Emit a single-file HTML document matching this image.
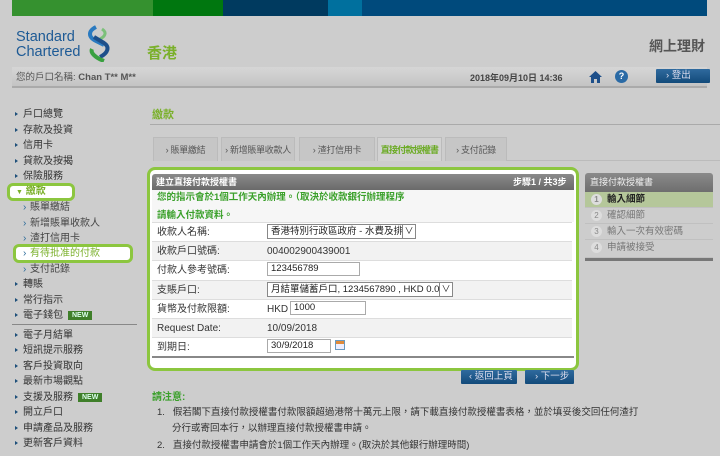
<!DOCTYPE html>
<html><head><meta charset="utf-8">
<style>
*{margin:0;padding:0;box-sizing:border-box}
body{width:720px;height:456px;overflow:hidden;background:#cdcdcd;font-family:"Liberation Sans","Noto Sans CJK TC",sans-serif;font-size:10px;line-height:12px;color:#3a3a3a;position:relative}
.a{position:absolute;white-space:nowrap}
.nav{position:absolute;left:23px;font-size:10px;color:#333;white-space:nowrap}
.nav:before{content:"";position:absolute;left:-8px;top:3px;border-left:3px solid #1d4f7a;border-top:2.5px solid transparent;border-bottom:2.5px solid transparent}
.sub{position:absolute;left:30px;font-size:10px;color:#444;white-space:nowrap}
.sub:before{content:"›";position:absolute;left:-7px;top:0;color:#2a6a9a}
.new{display:inline-block;background:#3f7f2a;color:#dfe;font-size:7px;line-height:9px;font-weight:bold;padding:0 4px;margin-left:5px;vertical-align:1px}
.tab{position:absolute;top:137px;height:24px;border:1px solid #bbb;border-bottom:none;background:#c6c6c6;color:#555;font-size:9px;text-align:center;line-height:24px;white-space:nowrap;overflow:hidden;letter-spacing:-0.3px}
.row{position:absolute;left:152px;width:420px;border-top:1px solid #ddd;background:#fff}
.row.g{background:#f2f2f2}
.row span{position:absolute;left:5px;top:4px;font-size:10px;color:#333;white-space:nowrap}
.row b{position:absolute;left:115px;top:4px;font-weight:normal;font-size:10px;color:#333;white-space:nowrap}
.inp{position:absolute;border:1px solid #aaa;background:#fff;height:14px;font-size:9.5px;line-height:12px;padding:0 3px;color:#222;white-space:nowrap}
.sel{position:absolute;border:1px solid #888;background:#fff;height:15px;font-size:9.5px;line-height:13px;padding:0 16px 0 3px;color:#222;white-space:nowrap;overflow:hidden}
.sel i{position:absolute;right:0;top:0;width:13px;height:13px;border-left:1px solid #888;background:#fff;font-style:normal;text-align:center;line-height:12px;font-size:9px}
.step{position:absolute;left:585px;width:128px;height:16px;font-size:9.5px;color:#777;border-bottom:1px solid #c0c0c0;white-space:nowrap}
.step em{position:absolute;left:6px;top:2px;width:11px;height:11px;border-radius:50%;background:#ddd;color:#888;font-style:normal;font-size:8px;text-align:center;line-height:11px}
.step span{position:absolute;left:22px;top:2px}
.btn{position:absolute;height:14px;background:linear-gradient(#2f6a9e,#124a7a);color:#dde;font-size:9.5px;line-height:14px;border-radius:1px;white-space:nowrap}
</style></head><body>
<div class="a" style="left:12px;top:0;width:141px;height:16px;background:#35912f"></div>
<div class="a" style="left:153px;top:0;width:70px;height:16px;background:#00770f"></div>
<div class="a" style="left:223px;top:0;width:105px;height:16px;background:#003a5f"></div>
<div class="a" style="left:328px;top:0;width:34px;height:16px;background:#00709e"></div>
<div class="a" style="left:362px;top:0;width:345px;height:16px;background:#004a7c"></div>
<div class="a" style="left:16px;top:30px;font-size:14.5px;line-height:15px;color:#1d5a95">Standard<br>Chartered</div>
<svg class="a" style="left:86px;top:25px" width="26" height="37" viewBox="0 0 26 37">
<path d="M10 2 C2 6 2 12 10 16 L18 20" stroke="#2a7ac0" stroke-width="4" fill="none"/>
<path d="M16 4 C22 8 18 12 14 14" stroke="#7cc07a" stroke-width="3" fill="none"/>
<path d="M8 12 L18 18 C24 22 22 28 14 32" stroke="#1d4f8a" stroke-width="4" fill="none"/>
<path d="M6 24 C4 28 10 33 18 36" stroke="#3aa040" stroke-width="4" fill="none"/>
</svg>
<div class="a" style="left:147px;top:45px;font-size:15px;line-height:17px;color:#7ab02a;font-weight:bold">香港</div>
<div class="a" style="left:649px;top:38px;font-size:14px;line-height:16px;color:#555;font-weight:bold">網上理財</div>
<div class="a" style="left:12px;top:67px;width:695px;height:21px;background:linear-gradient(#d6d6d6,#c4c4c4);border-bottom:2px solid #aaa"></div>
<div class="a" style="left:16px;top:72px;font-size:9.5px;color:#555">您的戶口名稱: <b>Chan T** M**</b></div>
<div class="a" style="left:470px;top:72px;font-size:9px;color:#444;font-weight:bold">2018年09月10日 14:36</div>
<svg class="a" style="left:589px;top:71px" width="13" height="12" viewBox="0 0 13 12"><path d="M6.5 0 L13 6 L11 6 L11 12 L8 12 L8 8 L5 8 L5 12 L2 12 L2 6 L0 6 Z" fill="#1d4f8a"/></svg>
<div class="a" style="left:615px;top:70px;width:13px;height:13px;border-radius:50%;background:#2a6aa5;color:#fff;font-size:9px;font-weight:bold;text-align:center;line-height:13px">?</div>
<div class="btn" style="left:656px;top:69px;width:54px;padding-left:10px">› 登出</div>
<!-- sidebar -->
<div class="nav" style="top:109px">戶口總覽</div>
<div class="nav" style="top:125px">存款及投資</div>
<div class="nav" style="top:140px">信用卡</div>
<div class="nav" style="top:156px">貸款及按揭</div>
<div class="nav" style="top:171px">保險服務</div>
<div class="a" style="left:7px;top:183px;width:68px;height:18px;background:#fff;border:3px solid #8cc63f;border-radius:6px"></div>
<div class="a" style="left:16px;top:186px;font-size:10px;color:#7ab02a;font-weight:bold"><span style="font-size:7px">▼</span> 繳款</div>
<div class="sub" style="top:202px">賬單繳結</div>
<div class="sub" style="top:218px">新增賬單收款人</div>
<div class="sub" style="top:233px">渣打信用卡</div>
<div class="a" style="left:13px;top:244px;width:120px;height:19px;background:#fff;border:3px solid #8cc63f;border-radius:6px"></div>
<div class="sub" style="top:248px;color:#7ab02a">有待批准的付款</div>
<div class="sub" style="top:264px">支付記錄</div>
<div class="nav" style="top:279px">轉賬</div>
<div class="nav" style="top:295px">常行指示</div>
<div class="nav" style="top:310px">電子錢包<span class="new">NEW</span></div>
<div class="a" style="left:12px;top:324px;width:125px;height:1px;background:#888"></div>
<div class="nav" style="top:330px">電子月結單</div>
<div class="nav" style="top:345px">短訊提示服務</div>
<div class="nav" style="top:361px">客戶投資取向</div>
<div class="nav" style="top:376px">最新市場觀點</div>
<div class="nav" style="top:392px">支援及服務<span class="new">NEW</span></div>
<div class="nav" style="top:407px">開立戶口</div>
<div class="nav" style="top:423px">申請產品及服務</div>
<div class="nav" style="top:438px">更新客戶資料</div>
<!-- content -->
<div class="a" style="left:152px;top:109px;font-size:11px;line-height:13px;color:#7ab02a;font-weight:bold">繳款</div>
<div class="a" style="left:150px;top:124px;width:570px;height:1px;background:#aaa"></div>
<div class="tab" style="left:153px;width:65px">› 賬單繳結</div>
<div class="tab" style="left:221px;width:74px">› 新增賬單收款人</div>
<div class="tab" style="left:299px;width:76px">› 渣打信用卡</div>
<div class="tab" style="left:377px;width:65px;background:#d2d2d2;color:#6aaa22;font-weight:bold;letter-spacing:-0.8px">直接付款授權書</div>
<div class="tab" style="left:445px;width:62px">› 支付記錄</div>
<div class="a" style="left:507px;top:160px;width:213px;height:1px;background:#bbb"></div>
<!-- form -->
<div class="a" style="left:147px;top:167px;width:432px;height:204px;background:#fff;border:3px solid #8cc63f;border-radius:8px"></div>
<div class="a" style="left:152px;top:174px;width:422px;height:16px;background:linear-gradient(#8a8a8a,#6a6a6a);border-radius:3px 3px 0 0"></div>
<div class="a" style="left:156px;top:177px;font-size:9px;line-height:11px;color:#fff;font-weight:bold">建立直接付款授權書</div>
<div class="a" style="left:513px;top:177px;font-size:9px;line-height:11px;color:#fff;font-weight:bold">步驟1 / 共3步</div>
<div class="a" style="left:152px;top:190px;width:422px;height:32px;background:#f6f6f6"></div>
<div class="a" style="left:157px;top:192px;font-size:9.5px;color:#3aa02a;font-weight:bold">您的指示會於1個工作天內辦理。（取決於收款銀行辦理程序</div>
<div class="a" style="left:157px;top:210px;font-size:9.5px;color:#3aa02a;font-weight:bold">請輸入付款資料。</div>
<div class="row" style="top:222px;height:19px"><span>收款人名稱:</span></div>
<div class="sel" style="left:267px;top:224px;width:149px">香港特別行政區政府 - 水費及排污費<i>∨</i></div>
<div class="row g" style="top:241px;height:19px"><span>收款戶口號碼:</span><b>004002900439001</b></div>
<div class="row" style="top:260px;height:20px"><span>付款人參考號碼:</span></div>
<div class="inp" style="left:267px;top:262px;width:93px">123456789</div>
<div class="row g" style="top:280px;height:19px"><span>支賬戶口:</span></div>
<div class="sel" style="left:267px;top:282px;width:186px">月結單儲蓄戶口, 1234567890 , HKD 0.00 CR<i>∨</i></div>
<div class="row" style="top:299px;height:19px"><span>貨幣及付款限額:</span><b>HKD</b></div>
<div class="inp" style="left:290px;top:301px;width:76px">1000</div>
<div class="row g" style="top:318px;height:19px"><span>Request Date:</span><b>10/09/2018</b></div>
<div class="row" style="top:337px;height:19px"><span>到期日:</span></div>
<div class="inp" style="left:267px;top:339px;width:64px">30/9/2018</div>
<div class="a" style="left:335px;top:340px;width:10px;height:10px;border:1px solid #6a9ac0;background:linear-gradient(#e08a3a 0 3px,#eef 3px)"></div>
<div class="a" style="left:152px;top:356px;width:422px;height:2px;background:#888"></div>
<!-- steps -->
<div class="a" style="left:585px;top:173px;width:128px;height:19px;background:linear-gradient(#8a8a8a,#6e6e6e);border-radius:3px 3px 0 0"></div>
<div class="a" style="left:590px;top:177px;font-size:9px;line-height:11px;color:#eee">直接付款授權書</div>
<div class="step" style="top:192px;background:#b5c79a;color:#222;font-weight:bold"><em>1</em><span>輸入細節</span></div>
<div class="step" style="top:208px"><em>2</em><span>確認細節</span></div>
<div class="step" style="top:224px"><em>3</em><span>輸入一次有效密碼</span></div>
<div class="step" style="top:240px;height:18px"><em>4</em><span>申請被接受</span></div>
<div class="a" style="left:585px;top:258px;width:128px;height:3px;background:#777"></div>
<!-- buttons -->
<div class="btn" style="left:461px;top:370px;width:56px;padding-left:8px">‹ 返回上頁</div>
<div class="btn" style="left:525px;top:370px;width:49px;padding-left:10px">› 下一步</div>
<!-- notes -->
<div class="a" style="left:152px;top:392px;font-size:10px;color:#3aa02a;font-weight:bold">請注意:</div>
<div class="a" style="left:157px;top:407px;font-size:9.5px;color:#333">1.&nbsp;&nbsp; 假若閣下直接付款授權書付款限額超過港幣十萬元上限，請下載直接付款授權書表格，並於填妥後交回任何渣打</div>
<div class="a" style="left:172px;top:423px;font-size:9.5px;color:#333">分行或寄回本行，以辦理直接付款授權書申請。</div>
<div class="a" style="left:157px;top:440px;font-size:9.5px;color:#333">2.&nbsp;&nbsp; 直接付款授權書申請會於1個工作天內辦理。(取決於其他銀行辦理時間)</div>
</body></html>
